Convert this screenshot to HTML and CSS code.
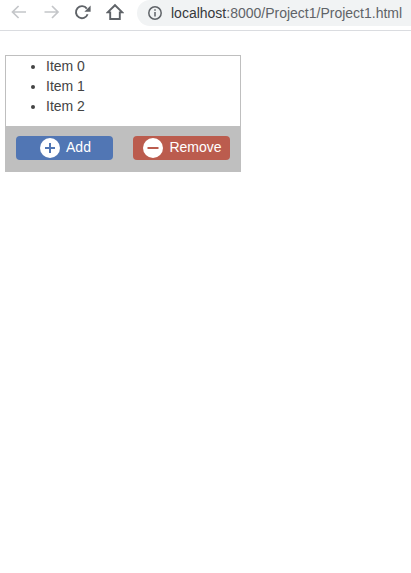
FILE: index.html
```html
<!DOCTYPE html>
<html>
<head>
<meta charset="utf-8">
<title>Project1</title>
<link rel="stylesheet" href="styles.css">
</head>
<body>
<header class="toolbar">
  <svg class="nav-icon" width="18" height="18" viewBox="0 0 18 18" fill="none" stroke="#c4c6c9" stroke-width="1.7"><path d="M16 9H2.5M8.6 3L2.5 9L8.6 15"/></svg>
  <svg class="nav-icon" width="18" height="18" viewBox="0 0 18 18" fill="none" stroke="#c4c6c9" stroke-width="1.7"><path d="M1.5 9H15M9 3L15 9L9 15"/></svg>
  <svg class="nav-icon nav-reload" width="18" height="18" viewBox="0 0 18 18" fill="none" stroke="#5f6368" stroke-width="1.9"><path d="M14.6 11.2A6 6 0 1 1 13.8 5.6"/><path d="M17.6 2.6V8.8H11.4Z" fill="#5f6368" stroke="none"/></svg>
  <svg class="nav-icon" width="18" height="18" viewBox="0 0 18 18" fill="none" stroke="#5f6368" stroke-width="1.9"><path d="M1.6 9.4L9 2.2L16.4 9.4H13.8V16H4.2V9.4Z"/></svg>
  <div class="omnibox">
    <svg width="16" height="16" viewBox="0 0 16 16" fill="none" stroke="#5f6368" stroke-width="1.5"><circle cx="8" cy="8" r="6.2"/><path d="M8 7V11.6M8 4.2V5.8"/></svg>
    <span class="url"><span class="host">localhost</span>:8000/Project1/Project1.html</span>
  </div>
</header>
<main class="widget">
  <ul class="list">
    <li>Item 0</li>
    <li>Item 1</li>
    <li>Item 2</li>
  </ul>
  <div class="actions">
    <button class="btn btn-add">
      <svg width="20" height="20" viewBox="0 0 20 20"><circle cx="10" cy="10" r="10" fill="#fff"/><path d="M10 5V15M5 10H15" stroke="#5176b4" stroke-width="2"/></svg>
      <span class="btn-label">Add</span>
    </button>
    <button class="btn btn-remove">
      <svg width="20" height="20" viewBox="0 0 20 20"><circle cx="10" cy="10" r="10" fill="#fff"/><path d="M4.5 10H15.5" stroke="#bb5c4e" stroke-width="2"/></svg>
      <span class="btn-label">Remove</span>
    </button>
  </div>
</main>
</body>
</html>
```

FILE: styles.css
```css
* { box-sizing: border-box; }
html, body { margin: 0; padding: 0; background: #fff; overflow: hidden; }
body { height: 573px; font-family: "Liberation Sans", Arial, sans-serif; }
.toolbar {
  height: 31px;
  display: flex;
  align-items: flex-start;
  padding: 3px 0 0 10px;
  border-bottom: 1px solid #dadce0;
  overflow: hidden;
}
.nav-icon { flex: none; margin: 0 15px 0 0; }
.nav-reload { margin-left: -3px; }
.omnibox {
  flex: none;
  width: 290px;
  height: 26px;
  margin: -3px 0 0 -2px;
  padding-left: 10px;
  border-radius: 13px;
  background: #f1f3f4;
  display: flex;
  align-items: center;
  gap: 8px;
  font-size: 14px;
  color: #5f6368;
  white-space: nowrap;
}
.host { color: #36393c; }
.widget { width: 236px; margin: 24px 0 0 5px; border: 1px solid #bfbfbf; }
.list {
  margin: 0;
  padding: 0 0 10px 40px;
  font-size: 14px;
  line-height: 20px;
  color: #444;
}
.actions {
  display: flex;
  justify-content: space-between;
  background: #bfbfbf;
  margin: 0 -1px -1px;
  padding: 10px 11px 12px;
}
.btn {
  width: 97px;
  height: 24px;
  padding: 0 0 0 2px;
  border: 0;
  border-radius: 4px;
  color: #fff;
  font: 14px "Liberation Sans", Arial, sans-serif;
  display: flex;
  align-items: center;
  justify-content: center;
  gap: 6px;
}
.btn-label { margin-bottom: 2px; }
.btn-add { background: #5176b4; }
.btn-remove { background: #bb5c4e; }
```
